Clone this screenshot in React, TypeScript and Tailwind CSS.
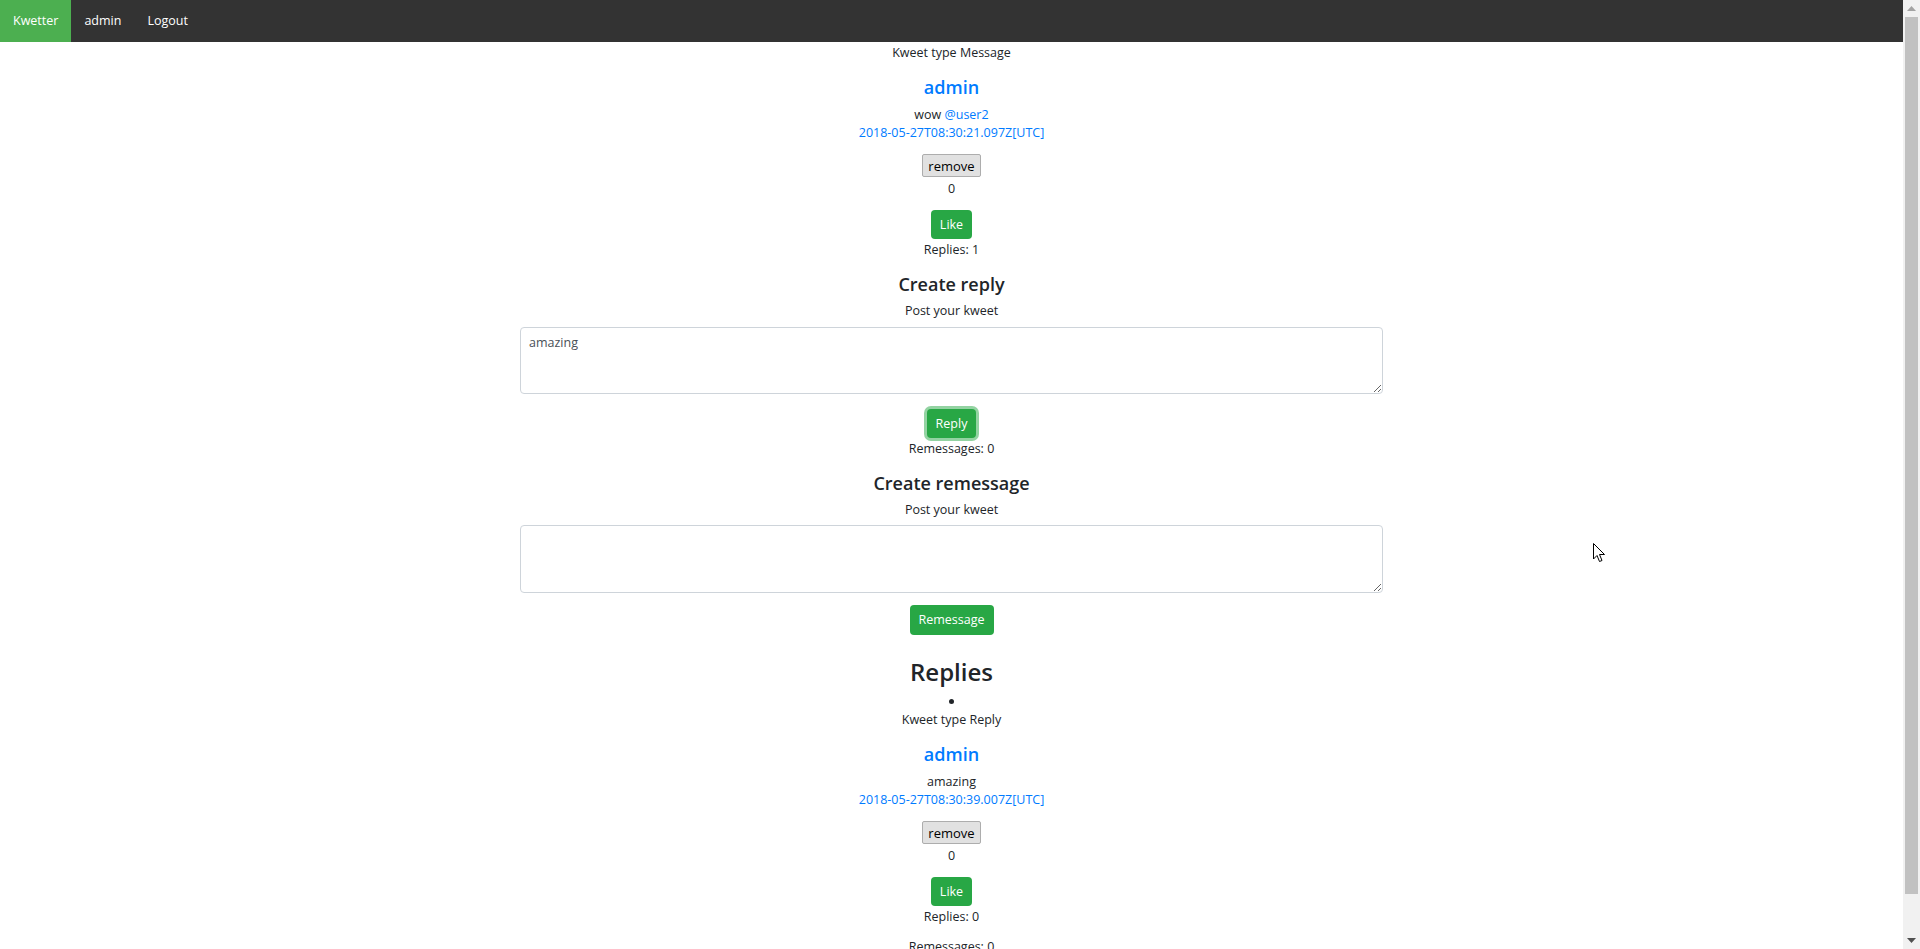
import { useState } from "react";

type KweetProps = {
    type: string;
    text: string;
    mention?: string;
    date: string;
    replies: number;
};

function Kweet({ type, text, mention, date, replies }: KweetProps) {
    return (
        <div className="flex flex-col items-center">
            <div>Kweet type {type}</div>
            <h5 className="mt-[14px] text-[18px] leading-[22px] font-semibold text-[#007bff]">admin</h5>
            <p className="mt-[8px]">
                {text}
                {mention && (
                    <>
                        {" "}
                        <a href="#" className="text-[#007bff]">
                            {mention}
                        </a>
                    </>
                )}
            </p>
            <a href="#" className="text-[#007bff]">
                {date}
            </a>
            <button className="mt-[12px] h-[23px] px-[5px] bg-[#e1e1e1] border border-[#adadad] rounded-[2px] text-[13px] leading-[20px] text-black">
                remove
            </button>
            <div className="mt-[3px]">0</div>
            <button className="mt-[12px] h-[29px] px-[9px] bg-[#28a745] rounded-[4px] text-white">Like</button>
            <div className="mt-[2px]">Replies: {replies}</div>
        </div>
    );
}

function CreateForm({
    title,
    value,
    focused,
    onChange,
}: {
    title: string;
    value: string;
    focused?: boolean;
    onChange: (v: string) => void;
}) {
    return (
        <div className="flex flex-col items-center">
            <h5 className="mt-[13px] text-[18px] leading-[24px] font-semibold">Create {title}</h5>
            <label className="mt-[6px]">Post your kweet</label>
            <textarea
                value={value}
                onChange={(e) => onChange(e.target.value)}
                className={`w-[863px] px-[8px] py-[6px] border border-[#ced4da] rounded-[4px] text-[#495057] text-left outline-none ${
                    title === "reply" ? "mt-[7px] h-[67px]" : "mt-[6px] h-[68px]"
                }`}
            />
            <button
                className={`px-[9px] bg-[#28a745] rounded-[4px] text-white capitalize ${
                    focused ? "mt-[15px] h-[29px] shadow-[0_0_0_3px_rgba(40,167,69,0.5)]" : "mt-[12px] h-[30px]"
                }`}
            >
                {title}
            </button>
        </div>
    );
}

// fake of the browser's classic scrollbar, the page scrolls in the screenshot
function Scrollbar() {
    return (
        <div className="w-[17px] shrink-0 h-full bg-[#f1f1f1] flex flex-col items-center">
            <div className="h-[17px] flex items-center justify-center">
                <svg width="9" height="5" viewBox="0 0 9 5">
                    <path d="M0 5 L4.5 0 L9 5 Z" fill="#a3a3a3" />
                </svg>
            </div>
            <div className="w-[13px] h-[877px] bg-[#c1c1c1]" />
            <div className="flex-1" />
            <div className="h-[17px] flex items-center justify-center">
                <svg width="9" height="5" viewBox="0 0 9 5">
                    <path d="M0 0 L9 0 L4.5 5 Z" fill="#505050" />
                </svg>
            </div>
        </div>
    );
}

export default function App() {
    const [reply, setReply] = useState("amazing");
    const [remessage, setRemessage] = useState("");

    return (
        <div className="flex h-screen overflow-hidden bg-white font-['Open_Sans','Noto_Sans',sans-serif] text-[#212529] text-[12.5px] leading-[18px]">
            <div className="relative flex-1 min-w-0 overflow-hidden">
                <nav className="h-[42px] bg-[#333333] flex text-[12.5px] text-white">
                    <a href="#" className="px-[13px] flex items-center bg-[#4caf50]">
                        Kwetter
                    </a>
                    <a href="#" className="px-[13px] flex items-center">
                        admin
                    </a>
                    <a href="#" className="px-[13px] flex items-center">
                        Logout
                    </a>
                </nav>

                <main className="flex flex-col items-center text-center pt-[2px] pb-[60px]">
                    <Kweet type="Message" text="wow" mention="@user2" date="2018-05-27T08:30:21.097Z[UTC]" replies={1} />

                    <CreateForm title="reply" value={reply} focused onChange={setReply} />
                    <div className="mt-[2px]">Remessages: 0</div>
                    <CreateForm title="remessage" value={remessage} onChange={setRemessage} />

                    <h3 className="mt-[22px] text-[24px] leading-[30px] font-[550]">Replies</h3>
                    <ul className="mt-[5px]">
                        <li className="flex flex-col items-center">
                            <span className="h-[18px] flex items-center">
                                <span className="w-[5px] h-[5px] rounded-full bg-[#212529]" />
                            </span>
                            <div className="mt-[1px]">
                                <Kweet type="Reply" text="amazing" date="2018-05-27T08:30:39.007Z[UTC]" replies={0} />
                            </div>
                            <div className="mt-[12px]">Remessages: 0</div>
                            <CreateForm title="reply" value="" onChange={() => {}} />
                        </li>
                    </ul>
                </main>

                {/* mouse pointer left in the screenshot */}
                <svg className="absolute left-[1593px] top-[543px]" width="13" height="20" viewBox="0 0 13 20">
                    <path
                        d="M0.5 0.5 L0.5 16 L4 12.5 L6.5 18.5 L9 17.5 L6.5 11.5 L11.5 11.5 Z"
                        fill="#fff"
                        stroke="#000"
                        strokeWidth="1"
                        strokeLinejoin="round"
                    />
                </svg>
            </div>
            <Scrollbar />
        </div>
    );
}
